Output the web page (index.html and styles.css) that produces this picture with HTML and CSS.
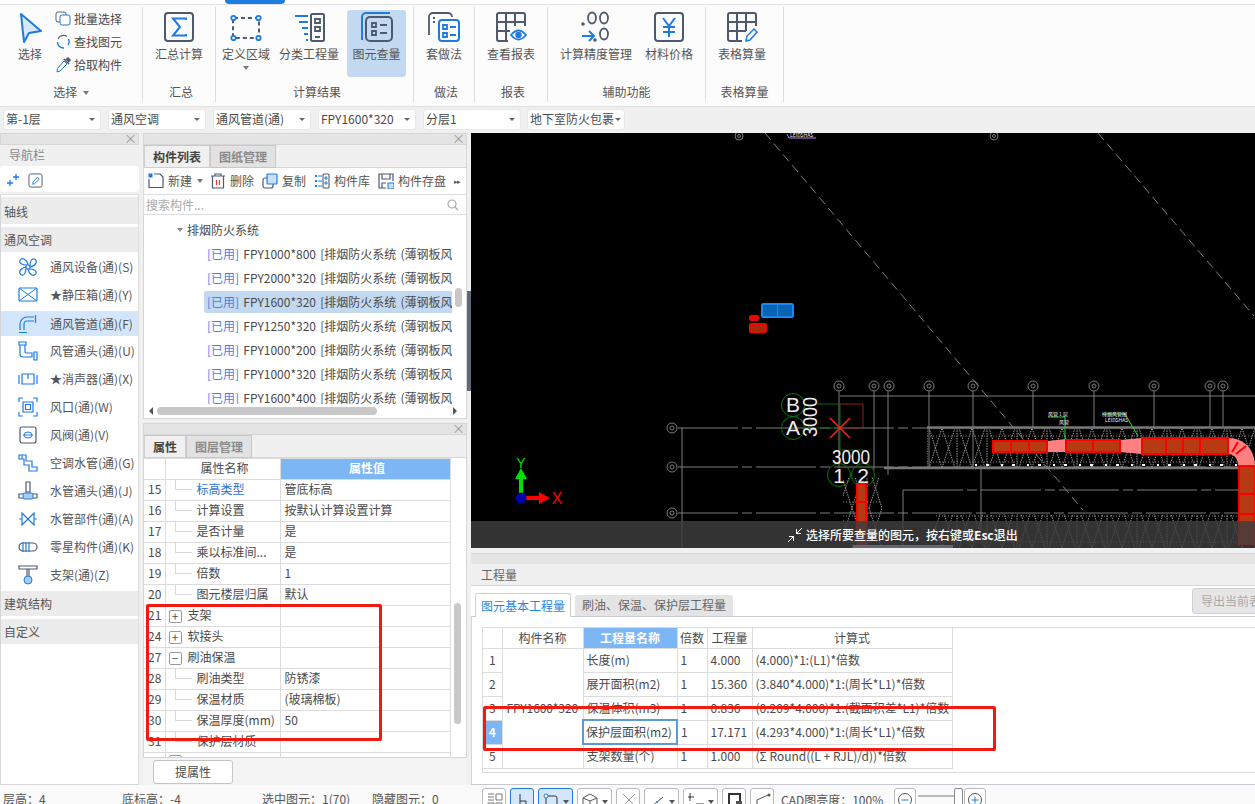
FILE: index.html
```html
<!DOCTYPE html>
<html lang="zh-CN">
<head>
<meta charset="utf-8">
<title>工程量</title>
<link rel="stylesheet" href="styles.css">
</head>
<body>
<div class="app">
  <div class="menu-strip">
    <span class="m m1">开始</span><span class="m m2">工程设置</span><span class="m m3">建模</span><span class="m active">工程量</span><span class="m m4">视图</span><span class="m m5">工具</span><span class="m m6">云应用</span><span class="m m7">协同建模</span>
  </div>
  <div class="ribbon">
    <section class="rb-group g1">
      <div class="rb-body">
        <div class="rb-btn w48">
          <svg class="ico" viewBox="0 0 32 32"><path d="M7 3 L27 20 L15 22 L10 31 Z" fill="#d9e9fb" stroke="#1e7be0" stroke-width="2" stroke-linejoin="round"/></svg>
          <span>选择</span>
        </div>
        <div class="rb-small">
          <div class="sm"><svg class="i16" viewBox="0 0 16 16"><rect x="1" y="1" width="10" height="10" rx="2" fill="none" stroke="#5b6678"/><rect x="5" y="4" width="10" height="10" rx="2" fill="#fff" stroke="#1e7be0"/></svg><span>批量选择</span></div>
          <div class="sm"><svg class="i16" viewBox="0 0 16 16"><path d="M3 5 A6 6 0 0 1 12 2.500" fill="none" stroke="#5b6678" stroke-width="1.300"/><path d="M13.500 5 A6 6 0 0 1 13 11" fill="none" stroke="#1e7be0" stroke-width="1.300"/><path d="M2.500 8 A6 6 0 0 0 9 14" fill="none" stroke="#1e7be0" stroke-width="1.300"/></svg><span>查找图元</span></div>
          <div class="sm"><svg class="i16" viewBox="0 0 16 16"><path d="M9 4 L12 7 L5 14 L2 15 L2.500 11.500 Z" fill="#fff" stroke="#1e7be0"/><path d="M9 2 L14 7 M11 2.500 L13 1 L15 3 L13.500 5" fill="#4d5a6e" stroke="#4d5a6e" stroke-width="1.500"/></svg><span>拾取构件</span></div>
        </div>
      </div>
      <div class="rb-label">选择 <i class="caret"></i></div>
    </section>
    <section class="rb-group g2">
      <div class="rb-body">
        <div class="rb-btn w72">
          <svg class="ico" viewBox="0 0 32 32"><rect x="2" y="2" width="28" height="28" rx="3" fill="none" stroke="#4d5a6e" stroke-width="2"/><path d="M23 9 V7.500 H10 L17 16 L10 24.500 H23 V23" fill="none" stroke="#1e7be0" stroke-width="2"/></svg>
          <span>汇总计算</span>
        </div>
      </div>
      <div class="rb-label shift">汇总</div>
    </section>
    <section class="rb-group g3">
      <div class="rb-body">
        <div class="rb-btn w50">
          <svg class="ico" viewBox="0 0 32 32"><rect x="3" y="7" width="26" height="20" rx="1" fill="none" stroke="#4d5a6e" stroke-width="2" stroke-dasharray="4 3"/><g fill="#fff" stroke="#1e7be0" stroke-width="1.800"><circle cx="3.500" cy="7" r="2.200"/><circle cx="28.500" cy="7" r="2.200"/><circle cx="3.500" cy="27" r="2.200"/><circle cx="28.500" cy="27" r="2.200"/></g></svg>
          <span>定义区域</span>
          <i class="caret small"></i>
        </div>
        <div class="rb-btn w76">
          <svg class="ico" viewBox="0 0 32 32"><path d="M2 5 H15 M6 11 H15 M9 17 H15 M11 23 H15 M13 29 H15" stroke="#1e7be0" stroke-width="1.800"/><rect x="18" y="3" width="13" height="27" rx="1.500" fill="none" stroke="#4d5a6e" stroke-width="2"/><path d="M22 8 h5 v4 h-5 z M22 16 h5 v4 h-5 z M22 26 h5" fill="none" stroke="#4d5a6e" stroke-width="1.800"/></svg>
          <span>分类工程量</span>
        </div>
        <div class="rb-btn w59 sel">
          <svg class="ico" viewBox="0 0 32 32"><path d="M1 29 V6 A4 4 0 0 1 5 2 H29" fill="none" stroke="#1e7be0" stroke-width="2"/><rect x="5" y="6" width="26" height="24" rx="4" fill="none" stroke="#4d5a6e" stroke-width="2"/><path d="M11 12 h4 v4 h-4 z M11 20 h4 v4 h-4 z M19 14 h7 M19 22 h7" fill="none" stroke="#4d5a6e" stroke-width="1.800"/></svg>
          <span>图元查量</span>
        </div>
      </div>
      <div class="rb-label">计算结果</div>
    </section>
    <section class="rb-group g4">
      <div class="rb-body">
        <div class="rb-btn w60">
          <svg class="ico" viewBox="0 0 32 32"><path d="M1 24 V6 A4 4 0 0 1 5 2 H20 A4 4 0 0 1 24 6" fill="none" stroke="#4d5a6e" stroke-width="1.800"/><path d="M5 7 h2 M5 11 h2" stroke="#4d5a6e" stroke-width="1.800"/><rect x="11" y="9" width="20" height="21" rx="3" fill="#fff" stroke="#1e7be0" stroke-width="2"/><path d="M15 14 h4 v4 h-4 z M15 22 h4 v4 h-4 z M22 16 h6 M22 24 h6" fill="none" stroke="#1e7be0" stroke-width="1.800"/></svg>
          <span>套做法</span>
        </div>
      </div>
      <div class="rb-label shift">做法</div>
    </section>
    <section class="rb-group g5">
      <div class="rb-body">
        <div class="rb-btn w72">
          <svg class="ico" viewBox="0 0 32 32"><path d="M13 30 H4 A2 2 0 0 1 2 28 V4 A2 2 0 0 1 4 2 H28 A2 2 0 0 1 30 4 V15 M2 11 H30 M2 20 H15 M11 2 V30 M20 2 V15" fill="none" stroke="#4d5a6e" stroke-width="2"/><path d="M16 24 Q23.500 15 31 24 Q23.500 33 16 24 Z" fill="#fff" stroke="#1e7be0" stroke-width="1.800"/><circle cx="23.500" cy="24" r="3.200" fill="#1e7be0"/></svg>
          <span>查看报表</span>
        </div>
      </div>
      <div class="rb-label shift">报表</div>
    </section>
    <section class="rb-group g6">
      <div class="rb-body">
        <div class="rb-btn w96">
          <svg class="ico" viewBox="0 0 32 32"><circle cx="3" cy="13" r="1.800" fill="#4d5a6e"/><ellipse cx="12" cy="7" rx="4" ry="5.500" fill="none" stroke="#4d5a6e" stroke-width="1.800"/><ellipse cx="24" cy="7" rx="4" ry="5.500" fill="none" stroke="#4d5a6e" stroke-width="1.800"/><circle cx="15" cy="29" r="1.800" fill="#4d5a6e"/><ellipse cx="24" cy="23" rx="4" ry="5.500" fill="none" stroke="#4d5a6e" stroke-width="1.800"/><path d="M2 25 H13 M9 20 L14 25 L9 30" fill="none" stroke="#1e7be0" stroke-width="2"/></svg>
          <span>计算精度管理</span>
        </div>
        <div class="rb-btn w50">
          <svg class="ico" viewBox="0 0 32 32"><rect x="2" y="2" width="28" height="28" rx="3" fill="none" stroke="#4d5a6e" stroke-width="2"/><path d="M10 7 L16 15 L22 7 M16 15 V26 M10 16 H22 M10 21 H22" fill="none" stroke="#1e7be0" stroke-width="2"/></svg>
          <span>材料价格</span>
        </div>
      </div>
      <div class="rb-label">辅助功能</div>
    </section>
    <section class="rb-group g7">
      <div class="rb-body">
        <div class="rb-btn w72">
          <svg class="ico" viewBox="0 0 32 32"><path d="M16 30 H4 A2 2 0 0 1 2 28 V4 A2 2 0 0 1 4 2 H28 A2 2 0 0 1 30 4 V15 M2 11 H30 M2 20 H20 M11 2 V30 M20 2 V20" fill="none" stroke="#4d5a6e" stroke-width="2"/><path d="M20 30 L21 25 L28 18 L31 21 L24 29 Z" fill="#fff" stroke="#1e7be0" stroke-width="1.500"/></svg>
          <span>表格算量</span>
        </div>
      </div>
      <div class="rb-label">表格算量</div>
    </section>
  </div>

  <div class="combo-bar">
    <div class="combo">第-1层<i class="caret"></i></div>
    <div class="combo">通风空调<i class="caret"></i></div>
    <div class="combo">通风管道(通)<i class="caret"></i></div>
    <div class="combo">FPY1600*320<i class="caret"></i></div>
    <div class="combo">分层1<i class="caret"></i></div>
    <div class="combo last">地下室防火包裹<i class="caret"></i></div>
  </div>

  <main class="main">
    <aside class="nav">
      <div class="closebar"><span class="x">×</span></div>
      <div class="nav-title">导航栏</div>
      <div class="nav-tools">
        <svg class="i16" viewBox="0 0 16 16"><path d="M10 2 V8 M7 5 H13 M4 8 V14 M1 11 H7" stroke="#1e7be0" stroke-width="1.300"/></svg>
        <svg class="navpen" viewBox="0 0 16 16"><rect x="1" y="1" width="14" height="14" rx="2" fill="none" stroke="#4d5a6e"/><path d="M5 12 L5.500 9.500 L10 4.500 L12 6.500 L7 11.500 Z" fill="none" stroke="#1e7be0"/></svg>
      </div>
      <div class="nav-list">
        <div class="nav-cat first">轴线</div>
        <div class="nav-cat">通风空调</div>
        <div class="nav-item"><svg class="i20" viewBox="0 0 20 20"><g fill="none" stroke="#1e7be0" stroke-width="1.200"><circle cx="10" cy="10" r="2"/><path d="M9 8 C4 8 1 6 2 3.500 C4 0 9 2 10 8 M12 9 C12 4 14 1 16.500 2 C20 4 18 9 12 10 M11 12 C16 12 19 14 18 16.500 C16 20 11 18 10 12 M8 11 C8 16 6 19 3.500 18 C0 16 2 11 8 10"/></g></svg><span>通风设备(通)(S)</span></div>
        <div class="nav-item"><svg class="i20" viewBox="0 0 20 20"><rect x="1" y="3" width="18" height="13" rx="1" fill="none" stroke="#1e7be0" stroke-width="1.200"/><path d="M1 3 L19 16 M19 3 L1 16" stroke="#1e7be0"/></svg><span>★静压箱(通)(Y)</span></div>
        <div class="nav-item sel"><svg class="i20" viewBox="0 0 20 20"><path d="M2 16 V10 A7 7 0 0 1 9 3 H16 M6 16 V10 A3 3 0 0 1 9 7 H16 M17.500 1 V9 M1 18.500 H9" fill="none" stroke="#1e7be0" stroke-width="1.200"/></svg><span>通风管道(通)(F)</span></div>
        <div class="nav-item"><svg class="i20" viewBox="0 0 20 20"><path d="M1 1 H8 V4 H1 Z M2 4 V13 A3 3 0 0 0 5 16 H14 V12 H8 A2 2 0 0 1 7 10 V4 M16 11 H19 V19 H16 Z" fill="none" stroke="#1e7be0" stroke-width="1.200"/></svg><span>风管通头(通)(U)</span></div>
        <div class="nav-item"><svg class="i20" viewBox="0 0 20 20"><path d="M1 6 V15 M19 6 V15 M4 5 H16 V15 H4 Z M10 5 V10" fill="none" stroke="#1e7be0" stroke-width="1.200"/></svg><span>★消声器(通)(X)</span></div>
        <div class="nav-item"><svg class="i20" viewBox="0 0 20 20"><path d="M5 5 H15 V15 H5 Z M7.500 7.500 H12.500 V12.500 H7.500 Z M1 5 V1 H5 M15 1 H19 V5 M19 15 V19 H15 M5 19 H1 V15" fill="none" stroke="#1e7be0" stroke-width="1.200"/></svg><span>风口(通)(W)</span></div>
        <div class="nav-item"><svg class="i20" viewBox="0 0 20 20"><rect x="2" y="2" width="16" height="16" rx="2" fill="none" stroke="#4d5a6e" stroke-width="1.200"/><ellipse cx="10" cy="10" rx="4" ry="3" fill="none" stroke="#1e7be0"/><path d="M5 10 H15" stroke="#1e7be0"/></svg><span>风阀(通)(V)</span></div>
        <div class="nav-item"><svg class="i20" viewBox="0 0 20 20"><path d="M1 2 H8 V8 H14 V14 H19 V18 H11 V12 H6 V6 H1 Z M4 2 V6" fill="none" stroke="#1e7be0" stroke-width="1.200"/></svg><span>空调水管(通)(G)</span></div>
        <div class="nav-item"><svg class="i20" viewBox="0 0 20 20"><path d="M8 1 H12 V11 H8 Z M1 13 H19 V17 H1 Z" fill="none" stroke="#4d5a6e" stroke-width="1.200"/><rect x="5" y="12" width="10" height="6" rx="1.500" fill="#a9ccf5" stroke="#1e7be0"/></svg><span>水管通头(通)(J)</span></div>
        <div class="nav-item"><svg class="i20" viewBox="0 0 20 20"><path d="M4 4 L16 16 V4 L4 16 Z M1 10 H4 M16 10 H19" fill="none" stroke="#1e7be0" stroke-width="1.200"/></svg><span>水管部件(通)(A)</span></div>
        <div class="nav-item"><svg class="i20" viewBox="0 0 20 20"><rect x="1" y="6" width="18" height="8" rx="4" fill="none" stroke="#4d5a6e" stroke-width="1.200"/><path d="M5 5 V15 M8 5 V15 M11 5 V15" stroke="#1e7be0" stroke-width="1.200"/></svg><span>零星构件(通)(K)</span></div>
        <div class="nav-item"><svg class="i20" viewBox="0 0 20 20"><path d="M1 1 H19 V4 H1 Z M9 4 V11 M11 4 V11" fill="none" stroke="#4d5a6e" stroke-width="1.200"/><circle cx="10" cy="15" r="4" fill="#a9ccf5" stroke="#1e7be0"/></svg><span>支架(通)(Z)</span></div>
        <div class="nav-cat mt">建筑结构</div>
        <div class="nav-cat">自定义</div>
      </div>
    </aside>

    <div class="mid">
      <section class="panel list-panel">
        <div class="closebar"><span class="x">×</span></div>
        <div class="tabs"><span class="tab on">构件列表</span><span class="tab">图纸管理</span></div>
        <div class="tools">
          <svg class="i16" viewBox="0 0 16 16"><path d="M1 6 V14.500 H15 V4 L12 1 H6" fill="none" stroke="#4d5a6e" stroke-width="1.200"/><rect x="0.500" y="0.500" width="4" height="4" fill="#1e7be0"/></svg><span class="t">新建</span><i class="caret s1"></i>
          <svg class="i16 s2" viewBox="0 0 16 16"><path d="M1 3 H15 M5 3 V1 H11 V3 M2.500 3 V15 H13.500 V3" fill="none" stroke="#4d5a6e" stroke-width="1.200"/><path d="M6.500 7 V12 M9.500 7 V12" stroke="#e33" stroke-width="1.200"/></svg><span class="t">删除</span>
          <svg class="i16 s3" viewBox="0 0 16 16"><rect x="1" y="5" width="10" height="10" rx="2" fill="#fff" stroke="#4d5a6e" stroke-width="1.200"/><rect x="5" y="1" width="10" height="10" rx="1" fill="#c9def7" stroke="#1e7be0" stroke-width="1.200"/></svg><span class="t">复制</span>
          <svg class="i16 s3" viewBox="0 0 16 16"><rect x="9" y="1" width="6" height="14" rx="1" fill="none" stroke="#4d5a6e" stroke-width="1.100"/><path d="M11 4 h2 v2 h-2 z M11 9 h2 v2 h-2 z M4 3 H8 M4 8 H8 M4 13 H8" fill="none" stroke="#1e7be0"/><path d="M1 2 h2 v2 h-2 z M1 7 h2 v2 h-2 z M1 12 h2 v2 h-2 z" fill="#1e7be0"/></svg><span class="t">构件库</span>
          <svg class="i16 s3" viewBox="0 0 16 16"><path d="M8 15 H1 V1 H15 V8 M4 1 V6 H12 V1 M4 15 V10 H8" fill="none" stroke="#4d5a6e" stroke-width="1.200"/><rect x="10" y="10" width="6" height="6" fill="#c9def7" stroke="#1e7be0"/></svg><span class="t">构件存盘</span>
          <span class="more">▸▸</span>
        </div>
        <div class="search"><span>搜索构件...</span><svg class="i12" viewBox="0 0 12 12"><circle cx="5" cy="5" r="4" fill="none" stroke="#aaa" stroke-width="1.200"/><path d="M8 8 L11 11" stroke="#aaa" stroke-width="1.200"/></svg></div>
        <div class="tree">
          <div class="tree-head"><i class="caret"></i>排烟防火系统</div>
          <div class="tree-row"><em>[已用]</em> FPY1000*800 [排烟防火系统 (薄钢板风管)]</div>
          <div class="tree-row"><em>[已用]</em> FPY2000*320 [排烟防火系统 (薄钢板风管)]</div>
          <div class="tree-row on"><em>[已用]</em> FPY1600*320 [排烟防火系统 (薄钢板风管)]</div>
          <div class="tree-row"><em>[已用]</em> FPY1250*320 [排烟防火系统 (薄钢板风管)]</div>
          <div class="tree-row"><em>[已用]</em> FPY1000*200 [排烟防火系统 (薄钢板风管)]</div>
          <div class="tree-row"><em>[已用]</em> FPY1000*320 [排烟防火系统 (薄钢板风管)]</div>
          <div class="tree-row"><em>[已用]</em> FPY1600*400 [排烟防火系统 (薄钢板风管)]</div>
          <div class="vbar list-v"></div>
          <div class="hscroll"><i class="al"></i><b></b><i class="ar"></i></div>
        </div>
      </section>

      <section class="panel prop-panel">
        <div class="closebar"><span class="x">×</span></div>
        <div class="tabs"><span class="tab on">属性</span><span class="tab">图层管理</span></div>
        <div class="prop-wrap">
          <table class="prop">
            <colgroup><col class="c1"><col class="c2"><col class="c3"></colgroup>
            <tr class="hd"><th></th><th>属性名称</th><th class="blue">属性值</th></tr>
            <tr><td>15</td><td class="leaf link">标高类型</td><td>管底标高</td></tr>
            <tr><td>16</td><td class="leaf">计算设置</td><td>按默认计算设置计算</td></tr>
            <tr><td>17</td><td class="leaf">是否计量</td><td>是</td></tr>
            <tr><td>18</td><td class="leaf">乘以标准间...</td><td>是</td></tr>
            <tr><td>19</td><td class="leaf">倍数</td><td>1</td></tr>
            <tr><td>20</td><td class="leaf">图元楼层归属</td><td>默认</td></tr>
            <tr><td>21</td><td class="grp"><i class="box">+</i>支架</td><td></td></tr>
            <tr><td>24</td><td class="grp"><i class="box">+</i>软接头</td><td></td></tr>
            <tr><td>27</td><td class="grp"><i class="box">−</i>刷油保温</td><td></td></tr>
            <tr><td>28</td><td class="leaf">刷油类型</td><td>防锈漆</td></tr>
            <tr><td>29</td><td class="leaf">保温材质</td><td>(玻璃棉板)</td></tr>
            <tr><td>30</td><td class="leaf">保温厚度(mm)</td><td>50</td></tr>
            <tr><td>31</td><td class="leaf">保护层材质</td><td></td></tr>
            <tr><td></td><td class="grp"><i class="box"></i></td><td></td></tr>
          </table>
          <div class="vbar prop-v"></div>
        </div>
        <div class="prop-foot"><button class="btn">提属性</button></div>
      </section>
    </div>

    <div class="split"><i class="handle"></i></div>

    <div class="right">
      <div class="canvas">
        <svg class="cad" viewBox="471 133 784 415">
          <defs>
            <pattern id="truss" width="30" height="40" patternUnits="userSpaceOnUse" x="927" y="428">
              <path d="M2 0 L15 40 L28 0 M2 40 L15 0 L28 40 M0 0 V40 M30 0 V40" fill="none" stroke="#9a9a9a" stroke-dasharray="1.500 1"/>
              <path d="M0 8 H30 M0 34 H30" stroke="#777" stroke-dasharray="1 2"/>
            </pattern>
          </defs>
          <g stroke="#7c7c7c" fill="none">
            <path d="M765 133 L1083 510" stroke-dasharray="9 5"/>
            <path d="M1098 133 L1254 316" stroke-dasharray="9 5"/>
            <path d="M880 270 L972 380" stroke-dasharray="9 5" stroke="none"/>
            <path d="M678 428 H1255" stroke-dasharray="60 4 10 4"/>
            <path d="M678 467 H1255" stroke-dasharray="60 4 10 4"/>
            <path d="M678 513 H1255" stroke-dasharray="60 4 10 4"/>
            <path d="M903 490 H1250" stroke-dasharray="60 4 10 4"/>
            <path d="M682 428 V548"/>
            <path d="M840 396 H1255"/>
            <path d="M839 391 V467 M874 391 V470 M888 391 V475 M929 391 V468 M973 391 V468 M1033 391 V428 M1094 391 V428 M1154 391 V428 M1210 391 V428 M1223 391 V428"/>
            <path d="M981 465 V530 M903 490 V548"/>
            <circle cx="739" cy="136" r="4"/>
            <circle cx="994" cy="136" r="4"/>
            <circle cx="672" cy="428" r="5"/><circle cx="672" cy="467" r="5"/><circle cx="672" cy="513" r="5"/>
            <circle cx="839" cy="386" r="5"/><circle cx="874" cy="386" r="5"/><circle cx="889" cy="386" r="5"/><circle cx="929" cy="386" r="5"/><circle cx="973" cy="386" r="5"/><circle cx="1033" cy="386" r="5"/><circle cx="1094" cy="386" r="5"/><circle cx="1154" cy="386" r="5"/><circle cx="1210" cy="386" r="5"/><circle cx="1223" cy="386" r="5"/>
            <circle cx="739" cy="136" r="1.500"/><circle cx="994" cy="136" r="1.500"/>
            <circle cx="672" cy="428" r="2"/><circle cx="672" cy="467" r="2"/><circle cx="672" cy="513" r="2"/>
            <circle cx="839" cy="386" r="2"/><circle cx="874" cy="386" r="2"/><circle cx="889" cy="386" r="2"/><circle cx="929" cy="386" r="2"/><circle cx="973" cy="386" r="2"/><circle cx="1033" cy="386" r="2"/><circle cx="1094" cy="386" r="2"/><circle cx="1154" cy="386" r="2"/><circle cx="1210" cy="386" r="2"/><circle cx="1223" cy="386" r="2"/>
          </g>
          <path d="M787 134 L789 138 H816" stroke="#c080f0" fill="none"/>
          <text class="tiny" x="790" y="137">LEIDSHAS</text>
          <rect x="927" y="429" width="328" height="38" fill="url(#truss)"/>
          <rect x="935" y="514" width="320" height="34" fill="url(#truss)"/>
          <rect x="843" y="477" width="39" height="71" fill="url(#truss)"/>
          <path d="M927 427.500 H1255 M884 468 H1255" stroke="#777" stroke-width="2.500"/>
          <path d="M975 465 H1255" stroke="#fff" stroke-width="2" stroke-dasharray="2 9 3 12"/>
          <path d="M817 404 H840 V450 H863 M805 428 H840" stroke="#0a6a0a" fill="none"/>
          <path d="M840 404 H863 V428 H840" stroke="#8a2020" fill="none"/>
          <path d="M830 418 L850 438 M850 418 L830 438" stroke="#f22" stroke-width="1.500"/>
          <g fill="none" stroke="#0a7a0a">
            <circle cx="793" cy="405" r="11.500"/><circle cx="793" cy="428" r="11.500"/><circle cx="839" cy="475" r="11.500"/><circle cx="863" cy="475" r="11.500"/>
          </g>
          <g class="cadt">
            <text x="793" y="412" text-anchor="middle">B</text>
            <text x="793" y="435" text-anchor="middle">A</text>
            <text x="832" y="464" textLength="38" lengthAdjust="spacingAndGlyphs">3000</text>
            <text x="839" y="483" text-anchor="middle">1</text>
            <text x="863" y="483" text-anchor="middle">2</text>
            <text transform="translate(817 437) rotate(-90)" textLength="40" lengthAdjust="spacingAndGlyphs">3000</text>
          </g>
          <path d="M1048 417 H1065 V440 M1102 414 H1125 L1138 436" stroke="#2fd02f" fill="none"/>
          <text class="tiny" x="1048" y="416">风管 1 层</text><text class="tiny" x="1059" y="424">风管</text>
          <text class="tiny" x="1102" y="416">排烟风管图</text><text class="tiny" x="1105" y="422">LEIDSHAS</text>
          <path d="M1048 441 L1066 439 V452 L1048 452 Z M1120 440 L1142 438 V454 L1120 452 Z" fill="#ff8080"/>
          <path d="M1228 438 C1245 438 1255 450 1255 466 H1238 C1238 458 1234 454 1228 454 Z" fill="#ff8080"/>
          <g fill="#b83a12" stroke="#f00" stroke-width="2">
            <rect x="993" y="441" width="18" height="11"/><rect x="1011" y="441" width="18" height="11"/><rect x="1029" y="441" width="18" height="11"/>
            <rect x="1066" y="440" width="27" height="12"/><rect x="1093" y="440" width="27" height="12"/>
            <rect x="1142" y="438" width="24" height="16"/><rect x="1166" y="438" width="17" height="16"/><rect x="1183" y="438" width="17" height="16"/><rect x="1200" y="438" width="28" height="16"/>
            <rect x="1239" y="466" width="16" height="28"/><rect x="1239" y="494" width="16" height="20"/><rect x="1239" y="514" width="16" height="30"/>
            <rect x="857" y="484" width="9" height="18" rx="1"/><rect x="857" y="502" width="9" height="46"/>
          </g>
          <path d="M1232 452 L1238 442 M1236 454 L1246 446" stroke="#f00" stroke-width="2"/>
          <rect x="762" y="304" width="31" height="13" rx="1.500" fill="#0a62b4" stroke="#1a88f0" stroke-width="2"/>
          <path d="M777.500 303 V318" stroke="#1a88f0"/>
          <rect x="750" y="316" width="8" height="4" rx="1.500" fill="#d01000" stroke="#f00" stroke-width="2"/>
          <rect x="750" y="324" width="16" height="8" rx="1.500" fill="#a52a08" stroke="#f00" stroke-width="2"/>
          <path d="M757.500 324 V332" stroke="#f00"/>
          <path d="M521 498 V476" stroke="#00e000" stroke-width="4"/><path d="M515 479 L521 468 L527 479 Z" fill="#00e000"/>
          <path d="M521 498 H541" stroke="#f00" stroke-width="4"/><path d="M539 492 L550 498 L539 504 Z" fill="#f00"/>
          <circle cx="521" cy="498" r="5.500" fill="#00a"/>
          <text class="axy" x="521" y="468" text-anchor="middle">Y</text>
          <text class="axx" x="557" y="504" text-anchor="middle">X</text>
        </svg>
        <div class="hint">
          <svg class="i16" viewBox="0 0 16 16"><path d="M1 15 L6.500 9.500 M2 9.500 H6.500 V14 M15 1 L9.500 6.500 M9.500 2 V6.500 H14" fill="none" stroke="#fff"/></svg>
          <span>选择所要查量的图元，按右键或<b>Esc</b>退出</span>
        </div>
        <i class="handle-h"></i>
      </div>
      <div class="qty">
        <div class="closebar wide"></div>
        <div class="qty-title">工程量</div>
        <div class="qty-tabs">
          <span class="qtab on">图元基本工程量</span><span class="qtab">刷油、保温、保护层工程量</span>
          <button class="export">导出当前表格</button>
        </div>
        <div class="qty-body">
          <div class="qty-frame">
            <table class="grid">
              <colgroup><col class="a"><col class="b"><col class="c"><col class="d"><col class="e"><col class="f"></colgroup>
              <tr class="hd"><th></th><th>构件名称</th><th class="blue">工程量名称</th><th>倍数</th><th>工程量</th><th>计算式</th></tr>
              <tr><td class="n">1</td><td class="name" rowspan="5">FPY1600*320</td><td>长度(m)</td><td>1</td><td>4.000</td><td>(4.000)*1:(L1)*倍数</td></tr>
              <tr><td class="n">2</td><td>展开面积(m2)</td><td>1</td><td>15.360</td><td>(3.840*4.000)*1:(周长*L1)*倍数</td></tr>
              <tr><td class="n">3</td><td>保温体积(m3)</td><td>1</td><td>0.836</td><td>(0.209*4.000)*1:(截面积差*L1)*倍数</td></tr>
              <tr><td class="n cur">4</td><td class="focus">保护层面积(m2)</td><td>1</td><td>17.171</td><td>(4.293*4.000)*1:(周长*L1)*倍数</td></tr>
              <tr><td class="n">5</td><td>支架数量(个)</td><td>1</td><td>1.000</td><td>(Σ Round((L + RJL)/d))*倍数</td></tr>
            </table>
          </div>
        </div>
      </div>
    </div>
  </main>

  <footer class="status">
    <div class="st-left">
      <span class="st1">层高：4</span><span class="st2">底标高：-4</span><span class="st3">选中图元：1(70)</span><span class="st4">隐藏图元：0</span>
    </div>
    <div class="st-tools">
      <span class="tb w24"><svg class="i16" viewBox="0 0 16 16"><path d="M1 2 H7 M1 5 H7 M1 8 H7 M9 2 H15 V8 H9 Z M1 11 H7 V16 H1 Z M9 11 H15 V16 H9 Z" fill="none" stroke="#777"/></svg></span>
      <span class="tb w24 act"><svg class="i16" viewBox="0 0 16 16"><path d="M5 2 V14 M5 9 H11 V14" fill="none" stroke="#333"/></svg></span>
      <span class="tb w35 act"><svg class="i16" viewBox="0 0 16 16"><rect x="3" y="4" width="11" height="12" rx="2" fill="none" stroke="#333"/><circle cx="3" cy="4" r="2" fill="#fff" stroke="#1e7be0"/></svg><i class="caret"></i></span>
      <span class="tb w35"><svg class="i16" viewBox="0 0 16 16"><path d="M8 2 L15 6 V14 L8 16 L1 14 V6 Z M1 6 L8 9 L15 6 M8 9 V16" fill="none" stroke="#555"/></svg><i class="caret"></i></span>
      <span class="tb w24"><svg class="i16" viewBox="0 0 16 16"><path d="M2 2 L14 14 M14 2 L2 14" stroke="#999"/></svg></span>
      <span class="tb w35"><svg class="i16" viewBox="0 0 16 16"><path d="M2 15 L14 5" stroke="#555"/><circle cx="8" cy="10" r="1" fill="#1e7be0"/></svg><i class="caret"></i></span>
      <span class="tb w35"><svg class="i16" viewBox="0 0 16 16"><path d="M2 1 V9 M-1 5 H6 M8 12 H16" stroke="#333" fill="none"/></svg><i class="caret"></i></span>
      <span class="tb w24"><svg class="i16" viewBox="0 0 16 16"><rect x="2" y="2" width="11" height="13" fill="none" stroke="#333" stroke-width="2"/><rect x="9" y="9" width="6" height="6" fill="#555"/></svg></span>
      <span class="tb w24"><svg class="i16" viewBox="0 0 16 16"><path d="M2 15 V8 L13 3" fill="none" stroke="#555"/><circle cx="14" cy="3" r="1.500" fill="#555"/></svg></span>
      <span class="cad-l">CAD图亮度：100%</span>
      <span class="tb zoom zminus"><svg class="i16" viewBox="0 0 16 16"><circle cx="8" cy="8" r="6.500" fill="none" stroke="#555"/><path d="M4.500 8 H11.500" stroke="#1e7be0"/></svg></span>
      <span class="slider"><i></i></span>
      <span class="tb zoom"><svg class="i16" viewBox="0 0 16 16"><circle cx="8" cy="8" r="6.500" fill="none" stroke="#555"/><path d="M4.500 8 H11.500 M8 4.500 V11.500" stroke="#1e7be0"/></svg></span>
    </div>
  </footer>

  <div class="mark mark-a"></div>
  <div class="mark mark-b"></div>
</div>
</body>
</html>
```
FILE: styles.css
```css
* { box-sizing: border-box; }
html, body { margin: 0; padding: 0; height: 100%; background: #fff; }
body { overflow: hidden; font: 12px/18px "Noto Sans CJK SC", "Noto Sans", sans-serif; color: #4a4a4a; }
svg { display: block; flex: none; }
i, em { font-style: normal; }
.app { position: relative; width: 1255px; height: 804px; overflow: hidden; display: flex; flex-direction: column; }

.ico { width: 32px; height: 32px; }
.i16 { width: 16px; height: 16px; }
.i20 { width: 20px; height: 20px; }
.i12 { width: 12px; height: 12px; }
.caret { display: inline-block; width: 0; height: 0; border: 3.500px solid transparent; border-top: 4px solid #777; border-bottom: 0; }

/* top menu, almost entirely scrolled off */
.menu-strip { height: 5px; flex: none; overflow: hidden; display: flex; background: #fff; border-bottom: 1px solid #e3e3e3; }
.m { margin-top: -15px; line-height: 18px; color: #444; }
.m1 { margin-left: 62px; }
.m2 { margin-left: 27px; }
.m3 { margin-left: 27px; }
.m.active { margin: 0 0 0 13px; width: 60px; height: 4px; background: #1e7ee0; border-radius: 0 0 8px 8px; color: transparent; overflow: hidden; }
.m4 { margin-left: 15px; }
.m5 { margin-left: 30px; }
.m6 { margin-left: 30px; }
.m7 { margin-left: 30px; }

/* ribbon */
.ribbon { height: 102px; flex: none; display: flex; background: #fcfcfc; border-bottom: 1px solid #e0e0e0; padding-top: 2px; }
.rb-group { height: 95px; display: flex; flex-direction: column; border-right: 1px solid #ddd; }
.g1 { width: 143px; } .g2 { width: 73px; } .g3 { width: 198px; padding-left: 5px; } .g4 { width: 61px; } .g5 { width: 73px; } .g6 { width: 158px; } .g7 { width: 78px; }
.rb-body { height: 75px; flex: none; display: flex; padding-top: 3px; }
.rb-label { height: 20px; line-height: 20px; text-align: center; color: #555; }
.rb-label.shift { padding-left: 4px; }
.rb-label .caret { margin-left: 3px; vertical-align: 2px; }
.rb-btn { display: flex; flex-direction: column; align-items: center; height: 67px; padding-top: 1px; border-radius: 3px; color: #555; white-space: nowrap; }
.rb-btn > span { margin-top: 2px; }
.rb-btn .small { margin-top: 3px; }
.rb-btn.sel { background: #c3d9f1; }
.w48 { width: 48px; margin-left: 6px; } .w50 { width: 50px; } .w59 { width: 59px; } .w60 { width: 60px; } .w72 { width: 72px; } .w76 { width: 76px; } .w96 { width: 96px; }
.rb-small { margin: -3px 0 0 1px; height: 69px; }
.sm { display: flex; align-items: center; gap: 3px; height: 23px; }

/* combos */
.combo-bar { height: 26px; flex: none; display: flex; gap: 7px; padding: 2px 0 0 3px; background: #f0f0f0; }
.combo { width: 98px; height: 21px; padding: 0 3px 2px 2px; line-height: 18px; background: #fff; border: 1px solid #e8e8e8; border-radius: 3px; display: flex; align-items: center; justify-content: space-between; white-space: nowrap; }
.combo .caret { margin: 2px 2px 0 0; border-width: 3px; border-top-width: 3.500px; border-top-color: #666; }
.combo.last { padding-right: 1px; margin-left: -1px; }

/* main */
.main { flex: 1; min-height: 0; display: flex; background: #f0f0f0; }
.closebar { height: 12px; flex: none; position: relative; background: #e4e4e4; border: 1px solid #d6d6d6; }
.closebar.wide { height: 11px; border-width: 1px 0 0; }
.x { position: absolute; right: 1px; top: -4px; line-height: 16px; font-size: 13px; color: #999; }

.nav { width: 140px; flex: none; display: flex; flex-direction: column; padding-right: 1px; }
.nav-title { height: 21px; line-height: 20px; padding-left: 9px; color: #888; background: #f0f0f0; }
.nav-tools { height: 26px; flex: none; display: flex; align-items: center; gap: 6px; padding: 2px 0 0 6px; background: #fff; border-radius: 3px; }
.navpen { width: 15px; height: 15px; }
.nav-list { flex: 1; margin-top: 2px; background: #fff; border: 1px solid #d6d6d6; border-top: 1px solid #ddd; border-right: 1px solid #ddd; }
.nav-cat { height: 25px; line-height: 25px; padding-left: 3px; margin-bottom: 3px; background: #ececec; color: #555; }
.nav-cat.first { margin-top: 2px; height: 27px; line-height: 29px; }
.nav-cat.mt { margin-top: 2px; }
.nav-item { height: 28px; display: flex; align-items: center; padding-left: 17px; gap: 12px; white-space: nowrap; color: #555; }
.nav-item.sel { background: #d3e6fb; height: 25px; margin: 2px 0 1px; }
.nav-cat + .nav-item { margin-top: -2px; }

.mid { width: 324px; flex: none; margin-left: 3px; display: flex; flex-direction: column; }
.panel { display: flex; flex-direction: column; background: #fff; border-left: 0; }
.list-panel { height: 286px; border-bottom: 1px solid #d6d6d6; }
.prop-panel { margin-top: 4px; height: 362px; background: #f4f4f4; }
.tabs { height: 23px; flex: none; display: flex; background: #f0f0f0; border: 1px solid #d6d6d6; border-width: 0 1px 1px; }
.tab { padding: 0 8px; line-height: 21px; height: 23px; background: #e2e2e2; color: #8a8a8a; border: 1px solid #c8c8c8; font-weight: 700; }
.tab.on { background: #f0f0f0; color: #444; border-color: #d0d0d0; border-top-color: #c8c8c8; }
.tools { height: 26px; flex: none; display: flex; align-items: center; padding-left: 4px; background: #fff; border-right: 1px solid #ddd; border-left: 1px solid #ddd; white-space: nowrap; }
.t { margin-left: 4px; color: #555; }
.s1 { margin-left: 5px; }
.s2 { margin-left: 7px; }
.s3 { margin-left: 8px; }
.more { margin-left: 8px; width: 7px; font-size: 7px; color: #555; letter-spacing: -1px; }
.search { height: 21px; flex: none; display: flex; align-items: center; justify-content: space-between; padding: 0 7px 0 2px; color: #aaa; background: #fff; border: 1px solid #ddd; border-width: 1px 1px 1px; }
.tree { position: relative; flex: 1; min-height: 0; overflow: hidden; padding-top: 4px; background: #fff; border-left: 1px solid #d6d6d6; border-right: 1px solid #d6d6d6; }
.tree-head { height: 22px; margin: 0 0 2px 33px; display: flex; align-items: center; gap: 4px; color: #4a4a4a; }
.tree-head .caret { border-top-color: #888; }
.tree-row { height: 22px; margin: 0 14px 2px 60px; padding-left: 3px; line-height: 21px; white-space: nowrap; overflow: hidden; color: #4a4a4a; word-spacing: 1.500px; }
.tree-row em { color: #3f84e5; }
.tree-row.on { background: #c3d9f1; border-radius: 2px 0 0 2px; }
.vbar { position: absolute; width: 7px; background: #c8c8c8; border-radius: 4px; }
.list-v { left: 311px; top: 73px; height: 19px; }
.hscroll { position: absolute; left: 0; right: 0; bottom: 0; height: 14px; display: flex; align-items: center; padding: 0 19px 0 5px; background: #fff; }
.hscroll b { display: block; width: 220px; height: 8px; margin-left: 4px; background: #c8c8c8; border-radius: 4px; }
.hscroll .al { border: 4px solid transparent; border-right: 4px solid #555; border-left: 0; }
.hscroll .ar { margin-left: auto; border: 4px solid transparent; border-left: 4px solid #555; border-right: 0; margin-right: -10px; }

.prop-wrap { position: relative; height: 300px; flex: none; overflow: hidden; background: #fff; border: 1px solid #d6d6d6; border-width: 0 1px 1px; }
.prop { width: 306px; table-layout: fixed; border-collapse: collapse; }
.prop .c1 { width: 21px; } .prop .c2 { width: 115px; } .prop .c3 { width: 170px; }
.prop th, .prop td { height: 21px; padding: 0 0 2px 4px; border: 1px solid #dcdcdc; font-weight: 400; white-space: nowrap; overflow: hidden; line-height: 18px; color: #4a4a4a; }
.prop td:first-child { padding-left: 4px; border-left: 0; }
.prop th:first-child { border-left: 0; }
.prop th { text-align: center; }
.prop th.blue, .grid th.blue { background: #7db6f5; color: #fff; font-weight: 700; }
.prop .leaf { padding-left: 31px; position: relative; }
.prop .leaf::before { content: ""; position: absolute; left: 9px; top: 0; bottom: 10px; width: 16px; border-left: 1px solid #d8d8d8; border-bottom: 1px solid #d8d8d8; }
.prop .link { color: #2a6fd8; }
.prop .grp { padding-left: 3px; }
.box { display: inline-block; width: 13px; height: 13px; margin-right: 6px; border: 1px solid #999; border-radius: 2px; line-height: 10px; text-align: center; font-size: 12px; vertical-align: -1px; color: #555; }
.prop-v { right: 5px; top: 145px; height: 121px; }
.prop-foot { flex: 1; padding: 2px 0 0 10px; }
.btn { display: block; width: 80px; height: 24px; padding: 0; font: inherit; color: #4a4a4a; background: #fff; border: 1px solid #c4c4c4; border-radius: 3px; }

.split { position: relative; width: 4px; flex: none; }
.handle { position: absolute; left: 0; top: 158px; width: 4px; height: 100px; background: #5f6875; }

.right { flex: 1; min-width: 0; display: flex; flex-direction: column; }
.canvas { position: relative; height: 415px; flex: none; background: #000; overflow: hidden; }
.cad { width: 784px; height: 415px; }
.cad .tiny { font-size: 5px; fill: #eee; }
.cadt text { font-size: 21px; fill: #eee; font-family: "Liberation Sans", sans-serif; }
.axy { font-size: 14px; fill: #00e000; font-family: "Liberation Sans", sans-serif; }
.axx { font-size: 16px; fill: #f00; font-family: "Liberation Sans", sans-serif; }
.hint { position: absolute; left: 0; right: 0; bottom: 0; height: 27px; display: flex; align-items: center; gap: 3px; padding-left: 316px; background: rgba(62, 62, 62, .82); color: #fff; font-weight: 500; }
.handle-h { position: absolute; left: 382px; bottom: 0; width: 100px; height: 3px; background: #5f6875; }
.qty { margin-top: 5px; flex: 1; min-height: 0; display: flex; flex-direction: column; background: #fff; }
.qty-title { height: 22px; flex: none; padding-left: 10px; line-height: 22px; color: #666; background: #f0f0f0; border-bottom: 1px solid #d6d6d6; }
.qty-tabs { position: relative; height: 31px; flex: none; display: flex; align-items: flex-end; padding-left: 4px; gap: 4px; background: #fff; border-bottom: 1px solid #c8c8d0; }
.qtab { height: 21px; padding: 0 7px; line-height: 20px; background: #e4e4e4; color: #666; border-radius: 3px 3px 0 0; white-space: nowrap; }
.qtab.on { height: 24px; margin-bottom: -1px; background: #fff; color: #1e88e5; border: 1px solid #cfcfd6; border-bottom: 0; line-height: 23px; padding: 0 5px; }
.export { position: absolute; right: -8px; top: 2px; width: 71px; height: 26px; padding: 0 0 0 8px; overflow: hidden; white-space: nowrap; text-align: left; font: inherit; color: #aaa; background: #e6e6e6; border: 1px solid #d0d0d0; border-radius: 3px; }
.qty-body { flex: 1; min-height: 0; padding: 10px 0 11px 10px; border-left: 1px solid #d6d6d6; border-bottom: 1px solid #c8c8d0; }
.qty-frame { height: 146px; border: 1px solid #dcdcdc; border-right: 0; }
.grid { width: 469px; table-layout: fixed; border-collapse: collapse; }
.grid .a { width: 19px; } .grid .b { width: 81px; } .grid .c { width: 94px; } .grid .d { width: 30px; } .grid .e { width: 45px; } .grid .f { width: 200px; }
.grid th, .grid td { padding: 0 3px; height: 24px; border: 1px solid #dcdcdc; font-weight: 400; white-space: nowrap; overflow: hidden; color: #4a4a4a; }
.grid tr:first-child th { border-top: 0; height: 20px; padding: 0; text-align: center; }
.grid th:first-child, .grid td.n { border-left: 0; }
.grid .n { text-align: center; padding: 0; }
.grid .n.cur { background: #7db6f5; color: #fff; font-weight: 700; }
.grid .name { text-align: center; padding: 0; letter-spacing: -.1px; }
.grid .focus { border: 2px solid #5b9bd5; padding: 0 2px; }

.status { height: 19px; flex: none; position: relative; background: #fafafa; overflow: hidden; display: flex; }
.st-left { width: 482px; flex: none; display: flex; padding-top: 5px; white-space: nowrap; color: #555; }
.st1 { margin-left: 3px; width: 119px; } .st2 { width: 140px; } .st3 { width: 110px; }
.st-tools { display: flex; gap: 4px; padding-top: 3px; }
.tb { height: 26px; flex: none; display: flex; gap: 4px; align-items: flex-start; padding: 3px 0 0 4px; border: 1px solid #bbb; border-radius: 3px; background: #fff; }
.tb .caret { margin-top: 8px; border-top-color: #555; }
.tb.act { background: #d3e6fb; border-color: #1e7be0; }
.w24 { width: 24px; } .w35 { width: 35px; }
.cad-l { margin: 3px 0 0 3px; white-space: nowrap; color: #555; }
.zoom { width: 22px; padding-left: 2px; }
.zminus { margin-left: 7px; }
.slider { position: relative; width: 42px; height: 20px; margin-left: -2px; }
.slider::before { content: ""; position: absolute; left: 0; right: 0; top: 7px; height: 2px; background: #bbb; }
.slider i { position: absolute; right: -3px; top: 0; width: 9px; height: 20px; background: #fff; border: 1px solid #888; border-radius: 2px; }

/* red annotation rectangles drawn over the screenshot */
.mark { position: absolute; border: 3px solid #f01a10; border-radius: 2px; }
.mark-a { left: 146px; top: 604px; width: 236px; height: 137px; }
.mark-b { left: 483px; top: 706px; width: 513px; height: 45px; }
```
